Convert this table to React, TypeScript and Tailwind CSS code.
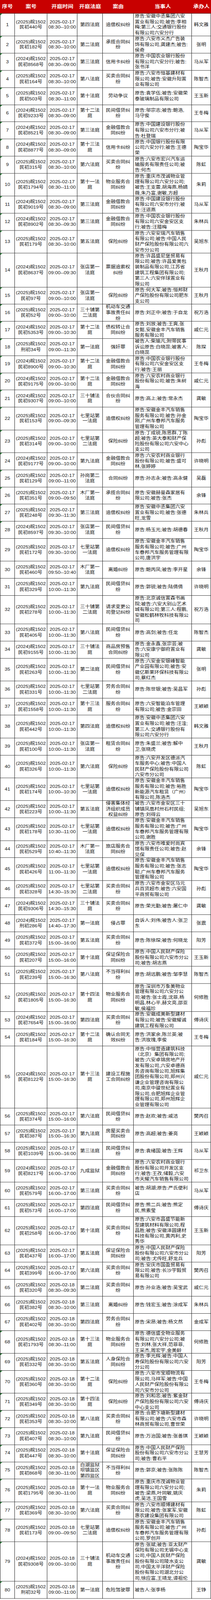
import React, { useEffect, useState } from 'react';

// [年份, 案号, 日, 时间, 法庭, 案由, 当事人, 承办人] — "|" marks a line break
const rows: string[][] = [
  ['2025', '民初440号', '17', '08:30--10:00', '第四法庭', '追偿权纠纷', '原告:安徽中丞集团六安|置业有限公司;被告:李相|梅;第三人:交通银行股份|有限公司六安分行', '韩文雅'],
  ['2025', '民初182号', '17', '08:30--10:00', '第二法庭', '承揽合同纠|纷', '原告:六安市义杰广告装|饰有限公司,龚建杰;被告:|侯奇', '张明'],
  ['2024', '民初8568号', '17', '08:30--09:00', '第三法庭', '信用卡纠纷', '原告:中国农业银行股份|有限公司六安分行;被告:|张书洋', '马从军'],
  ['2025', '民初164号', '17', '08:30--10:00', '第八法庭', '买卖合同纠|纷', '原告:六安市恒基建材有|限公司;被告:安徽升阳置|业有限公司', '陈智杰'],
  ['2025', '民初503号', '17', '08:30--11:00', '第十法庭', '劳动争议', '原告:袁学伍;被告:安徽荣|泰玻璃制品有限公司', '王玉新'],
  ['2024', '民初9233号', '17', '08:30--09:00', '第十二法|庭', '民间借贷纠|纷', '原告:邬宗志;被告:鲍浩,|马守俊', '王冬梅'],
  ['2024', '民初8521号', '17', '08:30--09:00', '第三法庭', '金融借款合|同纠纷', '原告:中国建设银行股份|有限公司六安市分行;被|告:杜登瑞', '马从军'],
  ['2024', '民初8877号', '17', '08:30--09:00', '第十三法|庭', '信用卡纠纷', '原告:中国银行股份有限|公司六安分行;被告:王德|荣', '陶宝华'],
  ['2025', '民初315号', '17', '08:30--10:00', '第六法庭', '买卖合同纠|纷', '原告:六安市宏兴汽车运|输服务有限责任公司;被|告:何杰', '陈虹'],
  ['2025', '民初1794号', '17', '08:30--11:00', '第十一法|庭', '物业服务合|同纠纷', '原告:重庆市茂诚物业管|理有限公司六安分公司;|被告:王支蕾,胡海燕,杨婧|薇,朱乃富,谢敏,方超', '朱莉'],
  ['2024', '民初9019号', '17', '08:30--09:00', '第三法庭', '金融借款合|同纠纷', '原告:中国建设银行股份|有限公司六安市分行;被|告:汪道燕', '马从军'],
  ['2024', '民初8902号', '17', '08:30--09:30', '第三法庭', '金融借款合|同纠纷', '原告:中国农业银行股份|有限公司六安金安区支|行;被告:汪腊梅', '朱林兵'],
  ['2025', '民初179号', '17', '08:30--10:00', '第五法庭', '保险纠纷', '原告:六安安瑞汽车销售|有限公司;被告:中国人民|财产保险股份有限公司六|安市分公司', '吴旭东'],
  ['2024', '民初8637号', '17', '09:00--09:30', '张店第一|法庭', '票据追索权|纠纷', '原告:许昌盛尼堡贸易有|限公司;被告:许昌爱美包|装制品有限公司,江苏省|建筑工程集团有限公司;|第三人:六安伴球置业有|限公司', '王秋月'],
  ['2025', '民初97号', '17', '09:00--10:00', '张店第一|法庭', '保险纠纷', '原告:何大军;被告:恒邦财|产保险股份有限公司肥东|支公司', '王秋月'],
  ['2025', '民初52号', '17', '09:00--10:00', '三十铺第|二法庭', '机动车交通|事故责任纠|纷', '原告:刘正中;被告:于自龙', '祝万浩'],
  ['2024', '民初5353号', '17', '09:00--10:30', '第十二法|庭', '债权转让合|同纠纷', '原告:刘放;被告:王爽,张|女懿,安徽金丰汽车销售|服务有限公司', '戚仁元'],
  ['2025', '刑初34号', '17', '09:00--11:30', '第一法庭', '强奸罪', '被告人:柴瑜凡;附带民事|诉讼原告:白晓蕊;被害人:|白晓蕊', '陈琛'],
  ['2024', '民初8900号', '17', '09:00--10:30', '第十二法|庭', '金融借款合|同纠纷', '原告:中国农业银行股份|有限公司六安金安区支|行;被告:王丽', '王冬梅'],
  ['2024', '民初9175号', '17', '09:00--10:00', '第十二法|庭', '金融借款合|同纠纷', '原告:六安农村商业银行|股份有限公司;被告:朱树|海', '戚仁元'],
  ['2024', '民初9307号', '17', '09:00--10:00', '三十铺法|庭', '合伙合同纠|纷', '原告:高上;被告:常永杰', '龚敏'],
  ['2025', '民初153号', '17', '09:00--09:30', '七里站第|一法庭', '追偿权纠纷', '原告:安徽金丰汽车销售|服务有限公司;被告:孙金|刚,广州车眷邦汽车服务|管理有限公司', '陶宝华'],
  ['2025', '民初314号', '17', '09:00--10:00', '七里站第|二法庭', '保险纠纷', '原告:丁成锐,陈思群,丁陈|超;被告:英大泰和财产保|险股份有限公司六安中心|支公司', '孙彪'],
  ['2024', '民初9177号', '17', '09:00--10:00', '第九法庭', '金融借款合|同纠纷', '原告:六安农村商业银行|股份有限公司;被告:盛可|林,张婷婷', '许晓明'],
  ['2025', '民初129号', '17', '09:00--11:00', '孙岗第二|法庭', '合同纠纷', '原告:孙志永;被告:高永健', '吴磊'],
  ['2025', '民初351号', '17', '09:00--09:50', '木厂第一|法庭', '承揽合同纠|纷', '原告:安徽赫曼森家居有|限公司;被告:张杰', '余锋'],
  ['2025', '民初248号', '17', '09:30--11:30', '第三法庭', '追偿权纠纷', '原告:安徽中丞集团六安|置业有限公司;被告:张德|旺,龙雪', '朱林兵'],
  ['2024', '民初8597号', '17', '09:30--10:00', '张店第一|法庭', '民间借贷纠|纷', '原告:杨玉光;被告:胡德春', '王秋月'],
  ['2025', '民初172号', '17', '09:30--10:00', '七里站第|一法庭', '追偿权纠纷', '原告:安徽金丰汽车销售|服务有限公司;被告:广州|车眷邦汽车服务管理有限|公司,唐洪宇', '陶宝华'],
  ['2025', '民初460号', '17', '09:50--10:40', '木厂第一|法庭', '离婚纠纷', '原告:鲍丙凤;被告:李开星', '余锋'],
  ['2025', '民初329号', '17', '10:00--11:30', '第九法庭', '民间借贷纠|纷', '原告:郭锐;被告:陆倩倩', '许晓明'],
  ['2025', '民初278号', '17', '10:00--11:30', '三十铺第|二法庭', '请求变更公|司登记纠纷', '原告:北京诚信置森书画|院;被告:六安大别山艺术|城有限公司;第三人:程鹏,|安徽松鹤林牧科技有限公|司', '祝万浩'],
  ['2025', '民初405号', '17', '10:00--11:30', '第八法庭', '民间借贷纠|纷', '原告:高剑;被告:任龙', '陈智杰'],
  ['2024', '民初9155号', '17', '10:00--11:30', '三十铺法|庭', '商品房预售|合同纠纷', '原告:金永鑫,张宗芸;被|告:六安康宁御府置业有|限公司', '龚敏'],
  ['2025', '民初263号', '17', '10:00--11:30', '第二法庭', '民间借贷纠|纷', '原告:六安金安银峰智能|产业园有限公司;被告:安|徽亿斯莱环保科技有限公|司,蔡红杰', '张明'],
  ['2025', '民初331号', '17', '10:00--11:30', '七里站第|二法庭', '劳务合同纠|纷', '原告:陈世银;被告:吴昌军', '孙彪'],
  ['2025', '民初1558号', '17', '10:00--11:30', '第十三法|庭', '服务合同纠|纷', '原告:六安智能泊车管理|有限公司;被告:金宗田', '王颖颖'],
  ['2025', '民初442号', '17', '10:00--11:30', '第四法庭', '追偿权纠纷', '原告:安徽中丞集团六安|置业有限公司;被告:汪淦;|第三人:交通银行股份有|限公司六安分行', '韩文雅'],
  ['2025', '民初100号', '17', '10:00--11:30', '张店第一|法庭', '租赁合同纠|纷', '原告:朱盛兰;被告:解中|卫,张晓虎', '王秋月'],
  ['2025', '民初326号', '17', '10:00--11:30', '第六法庭', '保险纠纷', '原告:六安开发区德派汽|车服务中心;被告:中国人|民财产保险股份有限公司|六安市分公司', '陈虹'],
  ['2025', '民初174号', '17', '10:00--10:30', '七里站第|一法庭', '追偿权纠纷', '原告:安徽金丰汽车销售|服务有限公司;被告:裕胜|新能源汽车租赁（广州）|有限公司,陈浩杰', '陶宝华'],
  ['2025', '民初223号', '17', '10:00--11:30', '第五法庭', '侵害集体经|济组织成员|权益纠纷', '被告:六安市金安区三十|铺镇凤凰村卅石村民组;|原告:刘得云', '吴旭东'],
  ['2025', '民初178号', '17', '10:30--11:00', '七里站第|一法庭', '追偿权纠纷', '原告:安徽金丰汽车销售|服务有限公司;被告:广州|车眷邦汽车服务管理有限|公司,谢胜', '陶宝华'],
  ['2025', '民初529号', '17', '10:40--11:30', '木厂第一|法庭', '旅店服务合|同纠纷', '原告:六安市唯爱时尚宾|馆有限责任公司;被告:赵|见保', '余锋'],
  ['2025', '民初426号', '17', '11:00--11:30', '七里站第|一法庭', '追偿权纠纷', '原告:安徽金丰汽车销售|服务有限公司;被告:张志|聪,广州车眷邦汽车服务|管理有限公司', '陶宝华'],
  ['2025', '民初328号', '17', '14:30--15:30', '七里站第|二法庭', '买卖合同纠|纷', '原告:六安市金安区马元|兵百货超市;被告:六安国|平商贸有限公司', '孙彪'],
  ['2024', '民初9306号', '17', '14:30--15:30', '三十铺法|庭', '买卖合同纠|纷', '原告:荣光勤;被告:屠仁中', '龚敏'],
  ['2024', '刑初286号', '17', '14:40--17:30', '第一法庭', '侵占罪', '自诉人:刘伟;被告人:张卫|东', '张震'],
  ['2025', '民初372号', '17', '15:00--16:00', '第五法庭', '买卖合同纠|纷', '原告:陈徐琛;被告:何晓龙', '阳芳'],
  ['2025', '民初207号', '17', '15:00--16:00', '第十法庭', '保证保险合|同纠纷', '原告:中国人民财产保险|股份有限公司六安市分公|司;被告:胡志燕', '王玉新'],
  ['2025', '民初239号', '17', '15:00--16:30', '第八法庭', '不当得利纠|纷', '原告:胡远鹏;被告:邹李慧', '陈智杰'],
  ['2025', '民初1805号', '17', '15:00--16:30', '第十四法|庭', '物业服务合|同纠纷', '原告:深圳市万象美物业|管理有限公司六安分公|司;被告:张士霞,沈菲,杨|明昌,林心平,赫文亮,邵亚|敏,侯福珍', '何修胜'],
  ['2024', '民初7654号', '17', '15:00--16:00', '第四法庭', '买卖合同纠|纷', '原告:安徽成美新型建材|有限公司;被告:安徽耀诚|建筑工程有限公司', '傅诗庆'],
  ['2025', '民初184号', '17', '15:00--16:30', '第十二法|庭', '确认合同无|效纠纷', '原告:洪家余,陈兰英;被|告:洪玫瑰,李俊', '王冬梅'],
  ['2024', '民初8122号', '17', '15:00--16:30', '第十三法|庭', '建设工程施|工合同纠纷', '原告:中恒营造建筑科技|（北京）集团有限公司;|被告:六安卓锦房地产开|发有限公司,六安卓德商|务咨询有限公司,旭辉集|团股份有限公司,郑州兴|谦企业管理咨询有限公|司,南京中骏世纪置业有|限公司,合肥旭辉企业管|理有限公司,郑州旭辉企|业管理有限公司', '戚仁元'],
  ['2025', '民初374号', '17', '15:00--16:00', '第六法庭', '民间借贷纠|纷', '原告:赵欢;被告:戚洁', '樊丙召'],
  ['2025', '民初387号', '17', '15:00--16:30', '第九法庭', '房屋买卖合|同纠纷', '原告:高超;被告:姜亮', '王颖颖'],
  ['2025', '民初1039号', '17', '15:00--16:00', '第三法庭', '民间借贷纠|纷', '原告:袁绪国;被告:王辉', '马从军'],
  ['2024', '民初8217号', '17', '16:00--17:00', '九成监狱', '金融借款合|同纠纷', '原告:六安农村商业银行|股份有限公司开发区支|行;被告:王孜,储毅,六安|市天耀汽车销售有限公司', '祁卫东'],
  ['2025', '民初579号', '17', '16:00--17:00', '第三法庭', '买卖合同纠|纷', '被告:胡湖;原告:严氏便利|店', '马从军'],
  ['2025', '民初573号', '17', '16:00--17:00', '第四法庭', '民间借贷纠|纷', '原告:熊二兵;被告:熊定|民,熊素莹', '傅诗庆'],
  ['2025', '民初258号', '17', '16:00--17:00', '第十法庭', '买卖合同纠|纷', '原告:六安市昌盛节能新|型建筑材料有限公司,程|昌胜;被告:安徽泽圆建材|科技有限公司,黄丙利,史|秀华', '王玉新'],
  ['2025', '民初437号', '17', '16:00--17:00', '第五法庭', '保证保险合|同纠纷', '原告:中国人民财产保险|股份有限公司六安市分公|司;被告:尤传旺,舒龙兵', '阳芳'],
  ['2025', '民初399号', '17', '16:00--17:00', '第六法庭', '买卖合同纠|纷', '原告:安庆市国盈贸易有|限公司;被告:长沙宇毅贸|易有限公司', '樊丙召'],
  ['2025', '民初320号', '18', '08:30--09:30', '第二法庭', '买卖合同纠|纷', '原告:孙业浩;被告:吴宝武', '戚仁元'],
  ['2025', '民初382号', '18', '08:30--10:00', '第三法庭', '离婚纠纷', '原告:钱宏玉;被告:涂成军', '朱林兵'],
  ['2025', '民初402号', '18', '08:30--10:00', '第四法庭', '劳务合同纠|纷', '原告:宋昂;被告:杨文然', '金成军'],
  ['2025', '民初1793号', '18', '08:30--11:00', '第十三法|庭', '物业服务合|同纠纷', '原告:德信盛全物业服务|有限公司六安分公司;被|告:刘林,张大祥,范菲菲,|王采杰,周宏宇,金美龄', '何修胜'],
  ['2025', '民初332号', '18', '08:30--10:00', '第五法庭', '人身保险合|同纠纷', '原告:李光辉;被告:中国人|寿保险股份有限公司六安|分公司', '阳芳'],
  ['2025', '民初360号', '18', '08:30--10:00', '第十二法|庭', '保险纠纷', '原告:六安市宝顺物流有|限公司,马祥军;被告:中国|人民财产保险股份有限公|司六安市分公司', '王冬梅'],
  ['2025', '民初349号', '18', '08:30--10:00', '第十四法|庭', '保险纠纷', '原告:刘和忠;被告:紫金财|产保险股份有限公司六安|中心支公司', '傅诗庆'],
  ['2025', '民初353号', '18', '08:30--10:00', '第八法庭', '买卖合同纠|纷', '原告:合肥下塘新型建材|有限公司;被告:六安市森|林商贸有限公司,曹世荣', '许晓明'],
  ['2025', '民初407号', '18', '08:30--10:00', '第九法庭', '民间借贷纠|纷', '原告:万治国;被告:张善琪', '王颖颖'],
  ['2025', '民初447号', '18', '08:30--10:00', '第十法庭', '保证保险合|同纠纷', '原告:中国人民财产保险|股份有限公司六安市分公|司;被告:曹右平', '王慧芳'],
  ['2025', '民初868号', '18', '08:30--11:00', '白湖监狱|坝镇监区|第四监区', '不当得利纠|纷', '原告:郭京;被告:张陈陈', '陈智杰'],
  ['2025', '民初1795号', '18', '08:30--11:00', '第十一法|庭', '物业服务合|同纠纷', '原告:重庆市茂诚物业管|理有限公司六安分公司;|被告:梁燕,叶同敏,姚庆|虎,吴洁,王国雪', '朱莉'],
  ['2025', '民初369号', '18', '08:30--10:00', '第六法庭', '买卖合同纠|纷', '原告:六安市顺博建材有|限公司;被告:张家军,安徽|惠农建设集团有限公司', '陈虹'],
  ['2025', '民初173号', '18', '09:00--09:50', '七里站第|二法庭', '追偿权纠纷', '原告:安徽金丰汽车销售|服务有限公司;被告:广州|车眷邦汽车服务管理有限|公司,罗创开', '孙彪'],
  ['2024', '民初9308号', '18', '09:00--10:00', '三十铺法|庭', '机动车交通|事故责任纠|纷', '原告:张斌;被告:亚太财产|保险有限公司无锡中心支|公司,中国人民财产保险|股份有限公司陵水支公|司,中国太平洋财产保险|股份有限公司湖北分公|司,徐应富,王靖龙,谭祖伦', '龚敏'],
  ['2025', '刑初32号', '18', '09:00--11:00', '第一法庭', '危险驾驶罪', '被告人:张李杨', '王铮']
];

const headers = ['序号', '案号', '开庭时间', '开庭法庭', '案由', '当事人', '承办人'];

// the sheet is laid out for a 4738px tall window
const SHEET_HEIGHT = 4738;

// fixed-height line so mixed Latin/CJK fallback fonts don't stretch the row
const line = 'h-[16.6px] leading-[16.6px] whitespace-nowrap';
const cell = 'flex flex-col justify-center min-h-[50.8px] border-r border-b border-[#1a1a1a]';

function Lines({ text }: { text: string }) {
  return <>
      {text.split('|').map((l, i) => <div key={i} className={line}>
          {l}
        </div>)}
    </>;
}

function useFit() {
  const calc = () => Math.min(1, window.innerHeight / SHEET_HEIGHT);
  const [scale, setScale] = useState(calc);
  useEffect(() => {
    const onResize = () => setScale(calc());
    window.addEventListener('resize', onResize);
    return () => window.removeEventListener('resize', onResize);
  }, []);
  return scale;
}

export default function App() {
  const scale = useFit();
  return <div className="w-[540px] overflow-hidden bg-white" style={scale < 1 ? {
    height: window.innerHeight
  } : undefined}>
      <div className="w-[540px] origin-top font-['Liberation_Sans','Noto_Sans_CJK_SC',sans-serif] text-[12.5px] text-[#141414]" style={scale < 1 ? {
      transform: `scaleY(${scale})`
    } : undefined}>
        <div className="grid grid-cols-[38px_83px_77px_65px_79px_149px_49px] h-[40px] bg-[#c80000] border-b border-[#1a1a1a]">
          {headers.map(h => <div key={h} className="flex items-center justify-center text-white font-bold text-[14px] whitespace-nowrap">
              {h}
            </div>)}
        </div>
        {rows.map((r, i) => {
        const [year, num, day, time, court, cause, parties, judge] = r;
        const flagged = i < 28 || i >= 67;
        return <div key={i} className="grid grid-cols-[38px_83px_77px_65px_79px_149px_49px]">
              <div className={`${cell} relative border-l items-center`}>
                {flagged && <span className="absolute top-0 left-0 w-0 h-0 border-t-[5px] border-r-[5px] border-t-[#1d7a2c] border-r-transparent" />}
                <div className={line}>{i + 1}</div>
              </div>
              <div className={`${cell} items-center`}>
                <div className={line}>({year})皖1502</div>
                <div className={line}>{num}</div>
              </div>
              <div className={`${cell} items-center`}>
                <div className={line}>2025-02-{day}</div>
                <div className={line}>{time}</div>
              </div>
              <div className={`${cell} items-center text-center`}>
                <Lines text={court} />
              </div>
              <div className={`${cell} items-center text-center`}>
                <Lines text={cause} />
              </div>
              <div className={`${cell} items-start pl-[3px]`}>
                <Lines text={parties} />
              </div>
              <div className={`${cell} items-center`}>
                <div className={line}>{judge}</div>
              </div>
            </div>;
      })}
      </div>
    </div>;
}
